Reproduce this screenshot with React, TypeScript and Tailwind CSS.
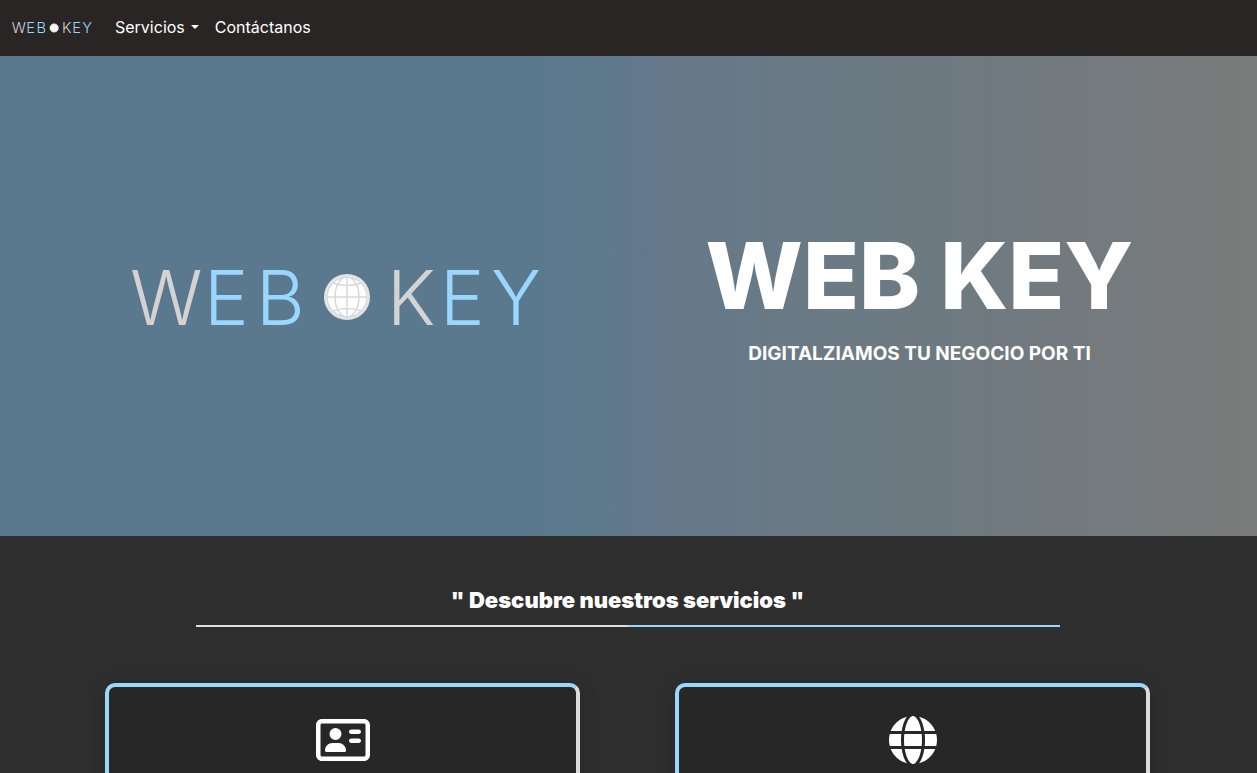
import React from "react";
import { FaGlobe, FaRegAddressCard } from "react-icons/fa6";

const letters = [
  { char: "W", x: -1, fill: "#d3d3d3" },
  { char: "E", x: 73, fill: "#9ad7ff" },
  { char: "B", x: 125, fill: "#9ad7ff" },
  { char: "K", x: 256, fill: "#d3d3d3" },
  { char: "E", x: 309, fill: "#9ad7ff" },
  { char: "Y", x: 360, fill: "#9ad7ff" },
];

const Logo: React.FC<{ className: string }> = ({ className }) => {
  return (
    <svg
      viewBox="0 0 410 100"
      className={`overflow-visible ${className}`}
      role="img"
      aria-label="Web Key"
    >
      <g fontFamily="Inter, sans-serif" fontWeight="300" fontSize="75">
        {letters.map((letter) => (
          <text key={letter.x} x={letter.x} y="79" fill={letter.fill}>
            {letter.char}
          </text>
        ))}
      </g>
      <circle cx="216" cy="51" r="22" fill="#ffffff" stroke="#e3e3e3" strokeWidth="2" />
      <g fill="none" stroke="#d9d9d9" strokeWidth="1.5">
        <circle cx="216" cy="51" r="20" />
        <ellipse cx="216" cy="51" rx="12" ry="20" />
        <path d="M216 31v40M196 51h40M202 37q14 5 28 0M202 65q14 -5 28 0" />
      </g>
    </svg>
  );
};

const App: React.FC = () => {
  return (
    <div className="min-h-screen w-full bg-[#2e2e2e] font-[Inter,sans-serif] text-white">
      {/* NAVBAR */}
      <nav className="flex h-14 items-center bg-[#292524] px-3 pb-0.5">
        <a href="#" className="mr-[15px] pt-0.5">
          <Logo className="w-20" />
        </a>
        <button className="flex items-center p-2 text-base leading-6">
          Servicios
          <span className="ml-1.5 border-x-4 border-t-4 border-x-transparent border-t-white" />
        </button>
        <a href="#contacto" className="px-2 py-2 text-base leading-6">
          Contáctanos
        </a>
      </nav>

      {/* HERO */}
      <header className="bg-[linear-gradient(90deg,#5a798e_0%,#5a798e_40%,#5e798c_48%,#61778d_50%,#65798a_53%,#6b7a84_66%,#707a80_80%,#757a7d_90%,#797c7a_100%)] pr-0.5">
        <div className="mx-auto grid h-[480px] max-w-[1168px] grid-cols-2 items-center">
          <div className="flex justify-center">
            <Logo className="w-[410px]" />
          </div>
          <div className="text-center">
            <h1 className="text-[92px] leading-[100px] font-extrabold">WEB KEY</h1>
            <p className="mt-4 text-[19px] leading-6 font-bold">
              DIGITALZIAMOS TU NEGOCIO POR TI
            </p>
          </div>
        </div>
      </header>

      {/* SERVICES */}
      <section className="pt-12 pr-0.5">
        <div className="mx-auto max-w-[864px]">
          <h2 className="pb-2 text-center text-[22px] leading-[33px] font-black">
            " Descubre nuestros servicios "
          </h2>
          <div className="flex h-0.5">
            <div className="flex-1 bg-[#e0dfdc]" />
            <div className="flex-1 bg-[#9ad7ff]" />
          </div>
        </div>

        <div className="mx-auto mt-14 flex max-w-[1140px] justify-around">
          <article className="flex w-5/12 justify-center rounded-[10px] border-4 border-t-[#9ad7ff] border-r-[#dddbdb] border-b-[#dddbdb] border-l-[#9ad7ff] bg-[#272727] pt-[29px] pb-16 shadow-[0_0_16px_rgba(0,0,0,0.15)]">
            <FaRegAddressCard className="h-12 w-[54px]" />
          </article>
          <article className="flex w-5/12 justify-center rounded-[10px] border-4 border-t-[#9ad7ff] border-r-[#dddbdb] border-b-[#dddbdb] border-l-[#9ad7ff] bg-[#272727] pt-[29px] pb-16 shadow-[0_0_16px_rgba(0,0,0,0.15)]">
            <FaGlobe className="size-12" />
          </article>
        </div>
      </section>
    </div>
  );
};

export default App;
